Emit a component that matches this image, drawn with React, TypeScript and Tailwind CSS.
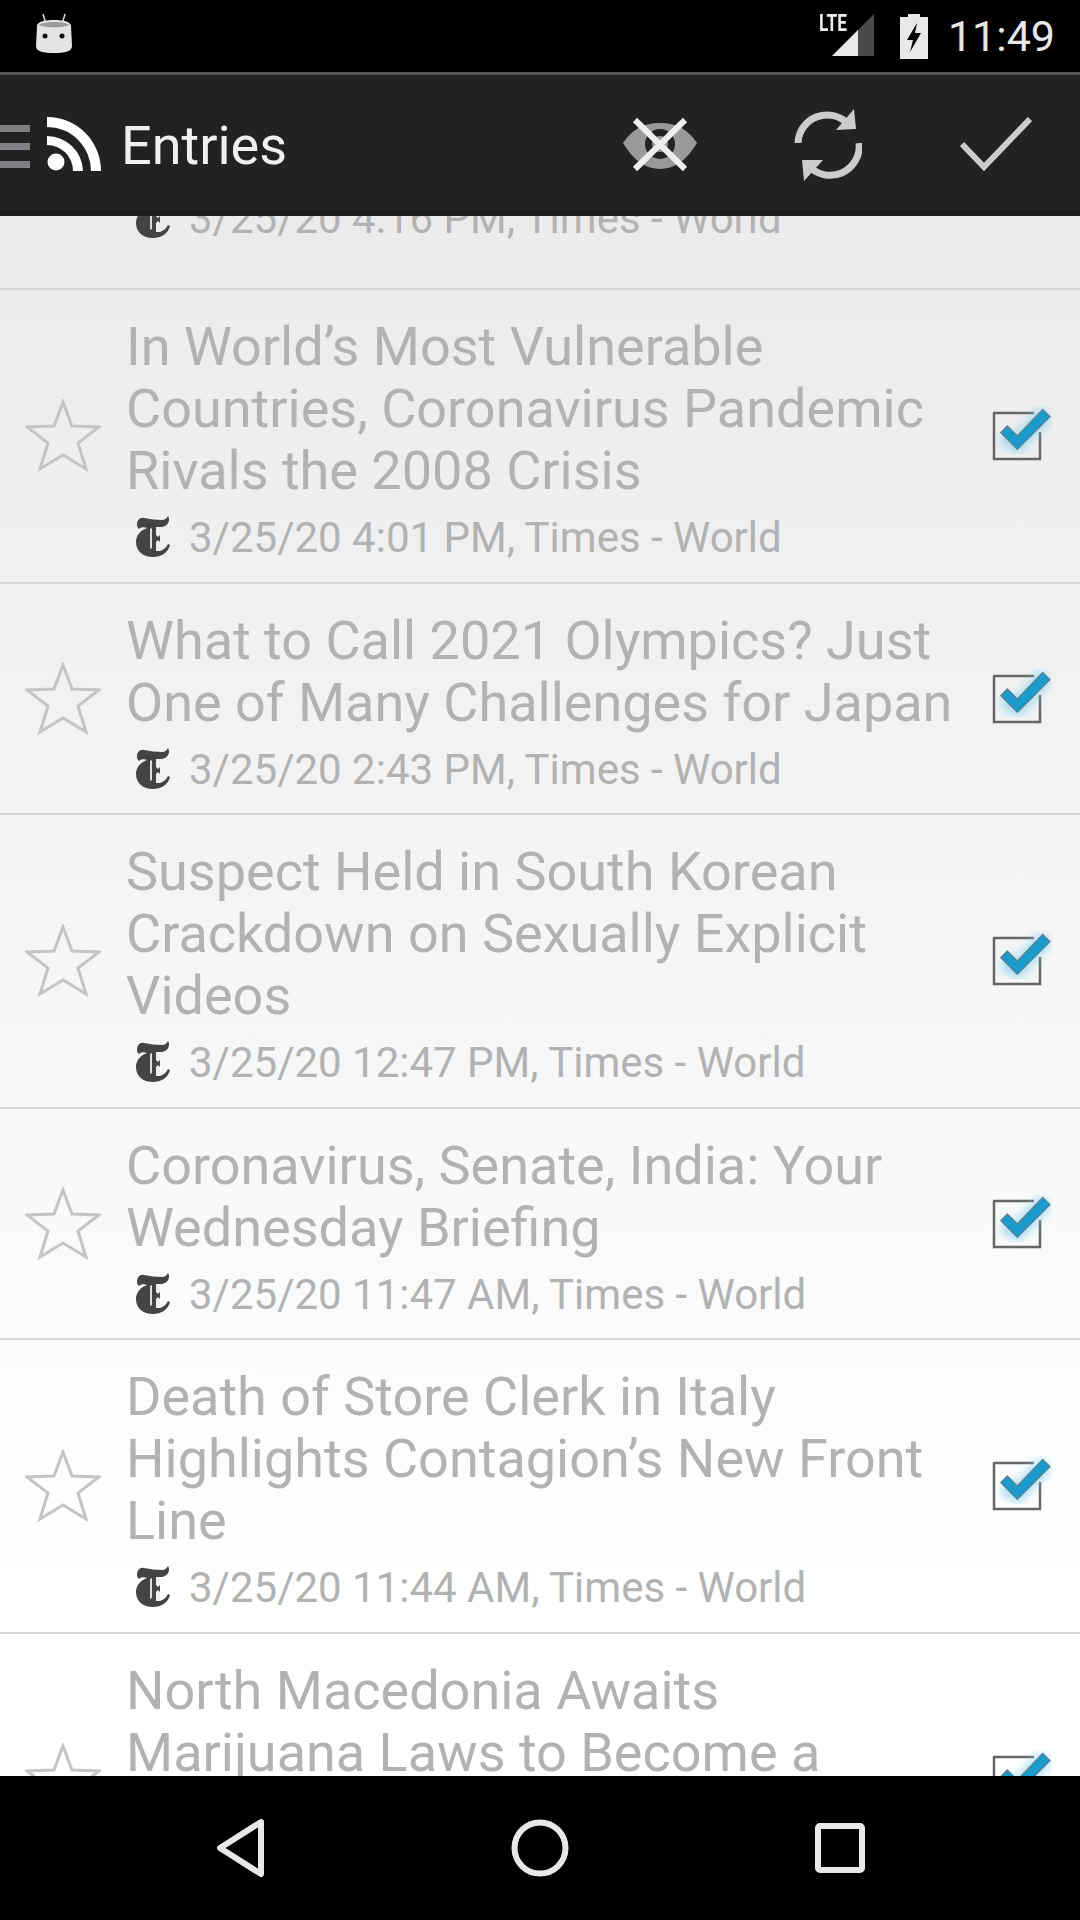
import React from "react";

const Star = () => (
  <svg width="76" height="74" viewBox="0 0 76 74" className="block">
    <path d="M38 3 L47 27 L74 28 L53 44 L61 70 L38 56 L15 70 L23 44 L2 28 L29 27 Z" fill="none" stroke="#c4c4c4" strokeWidth="3" strokeLinejoin="miter" />
  </svg>
);

const Check = () => (
  <svg width="62" height="60" viewBox="0 0 62 60" className="block">
    <defs>
      <filter id="glow" x="-30%" y="-30%" width="160%" height="160%">
        <feGaussianBlur stdDeviation="5" />
      </filter>
    </defs>
    <path d="M3 7 H44 M50 26 V53 H4 V7" fill="none" stroke="#666" strokeWidth="2.5" />
    <path d="M14 30 L27 38 L56 7" fill="none" stroke="#7fd0ee" strokeOpacity="0.7" strokeWidth="16" filter="url(#glow)" />
    <path d="M10.7 26.7 L17.3 20 L27.3 30 L52.7 3.3 L60 10.7 L27.3 43.3 Z" fill="#1a9bcb" stroke="#5d7f8c" strokeWidth="1.2" strokeLinejoin="round" />
  </svg>
);

const Nyt = () => (
  <svg width="34" height="42" viewBox="0 0 34 42" className="block">
    <path
      fill="#444"
      d="M1 9 C1 4 4 1 8 2 C14 3 20 4 26 4 C29 4 31 2 32 0 C34 3 33 8 29 10 C27 11 25 11 24 11 L24 35 C27 34 30 32 32 28 L34 29 C32 37 25 41 17 41 C7 41 0 35 0 26 C0 19 5 14 11 12 C8 11 5 11 3 13 C2 12 1 11 1 9 Z"
    />
    <path fill="#ddd" d="M14 13 L16 12 L16 32 L14 33 Z" />
    <path fill="#eee" d="M20 11 L24 11 L24 19 L22 21 L20 19 Z M20 26 L22 24 L24 26 L24 35 L20 35 Z" />
  </svg>
);

const Row = ({ title, meta, tall }: { title: string[]; meta?: string; tall?: boolean }) => (
  <div className={tall ? "flex items-center border-b-2 border-[#d6d6d6] h-[294px]" : "flex items-center border-b-2 border-[#d6d6d6]"}>
    <div className="w-[126px] shrink-0 pl-[25px]"><Star /></div>
    <div className={title.length === 3 ? "flex-1 self-start pt-[26px] pb-[22px]" : "flex-1 self-start pt-[26px] pb-[21px]"}>
      {title.map((l) => (
        <div key={l} className="text-[54px] leading-[62px] text-[#b2b2b2] whitespace-nowrap">{l}</div>
      ))}
      {meta && (
        <div className="mt-[12px] flex items-center h-[46px] pl-[10px]">
          <Nyt />
          <span className="ml-[19px] text-[42px] text-[#b2b2b2] whitespace-nowrap">{meta}</span>
        </div>
      )}
    </div>
    <div className="w-[92px] shrink-0 pl-[2px]"><Check /></div>
  </div>
);

const rows = [
  { title: ["In World’s Most Vulnerable", "Countries, Coronavirus Pandemic", "Rivals the 2008 Crisis"], meta: "3/25/20 4:01 PM, Times - World" },
  { title: ["What to Call 2021 Olympics? Just", "One of Many Challenges for Japan"], meta: "3/25/20 2:43 PM, Times - World" },
  { title: ["Suspect Held in South Korean", "Crackdown on Sexually Explicit", "Videos"], meta: "3/25/20 12:47 PM, Times - World" },
  { title: ["Coronavirus, Senate, India: Your", "Wednesday Briefing"], meta: "3/25/20 11:47 AM, Times - World" },
  { title: ["Death of Store Clerk in Italy", "Highlights Contagion’s New Front", "Line"], meta: "3/25/20 11:44 AM, Times - World" },
];

export default function App() {
  return (
    <div className="w-[1080px] h-[1920px] flex flex-col overflow-hidden bg-black font-['Roboto',sans-serif]">
      <div className="h-[72px] shrink-0 bg-black flex items-center relative z-10">
        <svg width="40" height="44" viewBox="0 0 40 44" className="ml-[34px] mt-[-8px]">
          <path d="M9 4 L12 14 M31 4 L28 14" stroke="#ddd" strokeWidth="1.5" />
          <path d="M3 16 C3 12 10 10 20 10 C30 10 37 12 37 16 L38 36 C38 42 30 43 20 43 C10 43 2 42 2 36 Z" fill="#e4e4e4" />
          <path d="M5 15 C8 11 32 11 35 15 C30 18 10 18 5 15 Z" fill="#9a9a9a" />
          <circle cx="11" cy="26" r="2.5" fill="#111" />
          <circle cx="28" cy="26" r="2.5" fill="#111" />
        </svg>
        <div className="ml-auto relative w-[54px] h-[44px] mt-[-2px]">
          <span className="absolute left-[-1px] top-[-5px] text-[24px] font-bold leading-[30px] text-[#eee] scale-x-[0.72] origin-left">LTE</span>
          <svg width="54" height="44" viewBox="0 0 54 44" className="block">
            <path d="M12 43 L54 1 V43 Z" fill="#4a4a4a" />
            <path d="M12 43 L38 17 V43 Z" fill="#e8e8e8" />
          </svg>
        </div>
        <svg width="30" height="45" viewBox="0 0 30 45" className="ml-[25px]">
          <path d="M9 0 H21 V3 H29 V45 H1 V3 H9 Z" fill="#e8e8e8" />
          <path d="M18 9 L8 26 H14 L11 38 L22 19 H16 Z" fill="#000" />
        </svg>
        <span className="ml-[19px] mr-[25px] text-[43px] leading-none text-[#e8e8e8]">11:49</span>
      </div>

      <div className="h-[144px] shrink-0 bg-[#222] border-t-[3px] border-t-[#555] border-b-[6px] border-b-[#1c1c1c] pt-[3px] flex items-center relative z-10">
        <div className="flex flex-col gap-[11px] w-[30px] mt-[5px]">
          <div className="h-[7px] bg-[#808084]" />
          <div className="h-[7px] bg-[#808084]" />
          <div className="h-[7px] bg-[#808084]" />
        </div>
        <svg width="54" height="54" viewBox="0 0 54 54" className="ml-[17px]">
          <circle cx="9" cy="45" r="8.5" fill="#fff" />
          <path d="M0 19 V28 A26 26 0 0 1 26 54 H36 A36 36 0 0 0 0 19 Z" fill="#fff" />
          <path d="M0 0 V10 A44 44 0 0 1 44 54 H54 A54 54 0 0 0 0 0 Z" fill="#fff" />
        </svg>
        <span className="ml-[20px] mt-[3px] text-[54px] leading-none text-[#f0f0f0]">Entries</span>
        <svg width="76" height="56" viewBox="0 0 76 56" className="ml-auto mt-[2px]">
          <path d="M1 26 C12 10 24 6 38 6 C52 6 64 10 75 26 C64 44 52 52 38 52 C24 52 12 44 1 26 Z" fill="#999" />
          <circle cx="38" cy="27" r="15" fill="#222" />
          <circle cx="38" cy="27" r="8" fill="#999" />
          <path d="M13 3 L63 52 M63 3 L13 52" stroke="#eee" strokeWidth="6" />
        </svg>
        <svg width="68" height="74" viewBox="0 0 68 74" className="ml-[96px] mt-[2px]">
          <path d="M4 35 A29 29 0 0 1 54 16" fill="none" stroke="#ccc" strokeWidth="7" />
          <path d="M60 1 L62 21 L42 22 Z" fill="#ccc" />
          <path d="M65 35 A29 29 0 0 1 14 57" fill="none" stroke="#ccc" strokeWidth="7" />
          <path d="M10 73 L8 52 L29 52 Z" fill="#ccc" />
        </svg>
        <svg width="72" height="56" viewBox="0 0 72 56" className="ml-[98px] mr-[48px] mt-[2px]">
          <path d="M2 27 L24 50 L70 2" fill="none" stroke="#ccc" strokeWidth="6" />
        </svg>
      </div>

      <div className="flex-1 overflow-hidden bg-gradient-to-b from-[#ebebeb] to-[#ffffff] to-[90%]">
        <div className="border-b-2 border-[#d6d6d6] h-[74px] overflow-hidden">
          <div className="mt-[-21px] flex items-center h-[46px] pl-[136px]">
            <Nyt />
            <span className="ml-[19px] text-[42px] text-[#b2b2b2] whitespace-nowrap">3/25/20 4:16 PM, Times - World</span>
          </div>
        </div>
        {rows.map((r) => (
          <Row key={r.meta} title={r.title} meta={r.meta} />
        ))}
        <Row tall title={["North Macedonia Awaits", "Marijuana Laws to Become a"]} />
      </div>

      <div className="h-[144px] shrink-0 bg-black flex items-center relative z-10">
        <svg width="50" height="58" viewBox="0 0 50 58" className="ml-[216px]">
          <path d="M45 3 L4 29 L45 55 Z" fill="none" stroke="#e8e8e8" strokeWidth="6" strokeLinejoin="round" />
        </svg>
        <svg width="58" height="58" viewBox="0 0 58 58" className="ml-[245px]">
          <circle cx="29" cy="29" r="25.5" fill="none" stroke="#e8e8e8" strokeWidth="6" />
        </svg>
        <svg width="50" height="50" viewBox="0 0 50 50" className="ml-[246px]">
          <rect x="3" y="3" width="44" height="44" rx="2" fill="none" stroke="#e8e8e8" strokeWidth="6" />
        </svg>
      </div>
    </div>
  );
}
